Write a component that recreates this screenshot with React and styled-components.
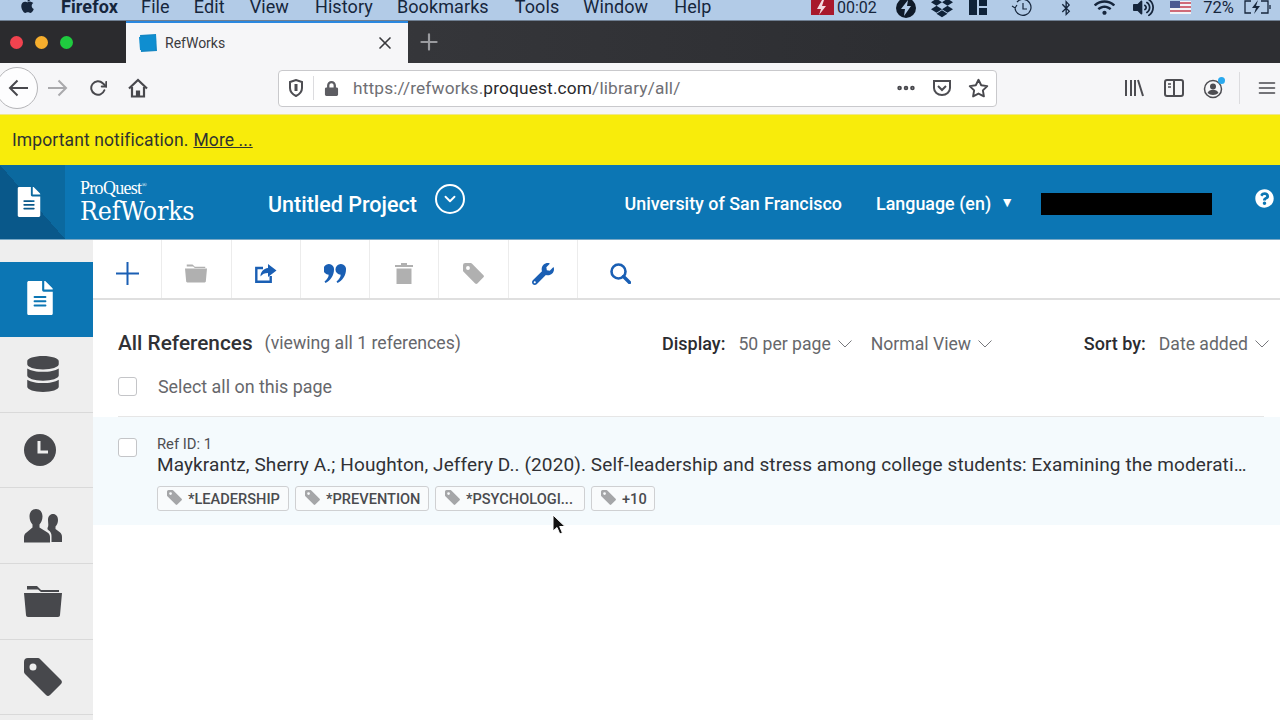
import React from "react";
import styled, { createGlobalStyle } from "styled-components";
import {
  FaApple, FaDropbox, FaBluetoothB, FaWifi, FaVolumeUp, FaDatabase, FaFileAlt,
  FaWrench, FaQuestionCircle, FaLock,
} from "react-icons/fa";
import { FiRotateCw, FiX, FiPlus, FiChevronDown, FiStar, FiMoreHorizontal, FiMenu } from "react-icons/fi";

const Global = createGlobalStyle`
  html, body { margin: 0; padding: 0; background: #fff; overflow: hidden; }
  body { font-family: Roboto, "Liberation Sans", sans-serif; }
  * { box-sizing: border-box; }
`;

const Page = styled.div`
  position: relative;
  width: 1280px;
  height: 720px;
  overflow: hidden;
  display: flex;
  flex-direction: column;
`;

/* mac menu bar */
const MenuBar = styled.div`
  height: 21px;
  flex: none;
  background: #b2cbe7;
  display: flex;
  align-items: flex-start;
  padding-left: 19px;
  color: #16263c;
  font-size: 18px;
  line-height: 14px;
  overflow: hidden;
  border-bottom: 1px solid #6f7f92;
`;
const MenuItem = styled.span`
  margin-left: ${(p) => p.$ml}px;
  font-weight: ${(p) => (p.$bold ? 700 : 400)};
  letter-spacing: 0.1px;
`;
const Status = styled.div`
  margin-left: auto;
  display: flex;
  align-items: center;
  height: 15px;
  font-size: 16px;
  color: #16263c;
`;
const StatusSlot = styled.span`
  display: flex;
  justify-content: center;
  align-items: center;
  width: ${(p) => p.$w}px;
  margin-left: ${(p) => p.$ml || 0}px;
  font-size: 16.5px;
`;
const Clock = styled.span`
  margin: 0 14px 0 3px;
  font-size: 16px;
  width: 45px;
`;

/* firefox tabs */
const TabStrip = styled.div`
  height: 42px;
  flex: none;
  background: linear-gradient(90deg, #3c3d41, #2d2e32 70%);
  display: flex;
  align-items: stretch;
`;
const Lights = styled.div`
  width: 126px;
  display: flex;
  align-items: center;
  gap: 12px;
  padding-left: 10px;
  background: #2b2b2e;
`;
const Light = styled.span`
  width: 13px;
  height: 13px;
  border-radius: 50%;
  background: ${(p) => p.$c};
`;
const Tab = styled.div`
  width: 282px;
  background: #f6f6f8;
  border-top: 2px solid #2a88e0;
  display: flex;
  align-items: center;
  padding-left: 12px;
  padding-right: 13px;
  font-size: 14px;
  color: #3b3b40;
`;
const TabTitle = styled.span`
  margin-left: 7px;
  flex: 1;
`;
const NewTab = styled.div`
  width: 42px;
  display: flex;
  align-items: center;
  justify-content: center;
  color: #9a9b9f;
`;

/* firefox nav */
const NavBar = styled.div`
  height: 51px;
  flex: none;
  background: #f6f6f8;
  display: flex;
  align-items: center;
  padding-bottom: 1px;
  color: #48484d;
`;
const BackCircle = styled.div`
  width: 42px;
  height: 42px;
  margin-left: -4px;
  border-radius: 50%;
  background: #fdfdfe;
  border: 1px solid #b5b5b8;
  display: flex;
  align-items: center;
  justify-content: center;
  padding-left: 2px;
`;
const NavSlot = styled.span`
  display: flex;
  justify-content: center;
  align-items: center;
  width: 40px;
  color: ${(p) => p.$c || "inherit"};
`;
const UrlBar = styled.div`
  margin-left: 120px;
  width: 719px;
  height: 37px;
  background: #fff;
  border: 1px solid #c9c9cc;
  border-radius: 4px;
  display: flex;
  align-items: center;
  padding-left: 9px;
`;
const UrlDivider = styled.span`
  width: 1px;
  height: 24px;
  background: #dcdcdf;
  margin: 0 10px 0 9px;
`;
const Url = styled.span`
  margin-left: 14px;
  flex: 1;
  font-size: 17.3px;
  letter-spacing: 0.15px;
  color: #6f6f74;
  b { font-weight: 400; color: #29292d; }
`;
const UrlSlot = styled.span`
  display: flex;
  justify-content: center;
  width: 36px;
`;
const NavRight = styled.div`
  margin-left: auto;
  display: flex;
  align-items: center;
  height: 100%;
`;
const NavDivider = styled.span`
  width: 1px;
  height: 32px;
  background: #dcdcdf;
  margin: 0 17px 0 5px;
`;

const Notice = styled.div`
  height: 51px;
  flex: none;
  background: #f8ec0b;
  border-top: 1px solid #f0e88a;
  display: flex;
  align-items: center;
  padding-left: 12px;
  font-size: 17.5px;
  color: #2f3330;
  letter-spacing: 0.1px;
  u { margin-left: 5px; }
`;

/* refworks header */
const Header = styled.div`
  height: 75px;
  flex: none;
  background: #0c76b4;
  display: flex;
  align-items: center;
  color: #fff;
  border-bottom: 1px solid #7aa9c6;
`;
const DocTab = styled.div`
  width: 65px;
  height: 100%;
  background: linear-gradient(to bottom left, #0b699f 50%, #09588a 50%);
  display: flex;
  align-items: center;
  justify-content: center;
  padding-right: 7px;
`;
const Logo = styled.div`
  margin-left: 15px;
  width: 188px;
  display: flex;
  flex-direction: column;
  margin-top: 0;
`;
const LogoTop = styled.span`
  font-family: "Liberation Serif", serif;
  font-size: 18px;
  line-height: 17px;
  letter-spacing: -0.7px;
  sup { font-size: 7px; vertical-align: 7px; line-height: 0; }
`;
const LogoMain = styled.span`
  font-family: "DejaVu Serif Condensed", "Liberation Serif", serif;
  font-size: 26.5px;
  line-height: 28px;
  letter-spacing: -0.2px;
`;
const Project = styled.span`
  font-size: 21.5px;
  font-weight: 500;
  margin-top: 4px;
`;
const ProjectToggle = styled.span`
  width: 30px;
  height: 30px;
  margin-left: 18px;
  margin-top: -7px;
  border: 2px solid #fff;
  border-radius: 50%;
  display: flex;
  align-items: center;
  justify-content: center;
`;
const HeaderRight = styled.div`
  margin-left: auto;
  display: flex;
  align-items: center;
  font-size: 17.9px;
  font-weight: 500;
  height: 100%;
  padding-top: 2px;
`;
const Caret = styled.span`
  font-size: 14px;
  margin-left: 9px;
  margin-top: -3px;
`;
const Redacted = styled.span`
  width: 171px;
  height: 22px;
  margin-left: 27px;
  margin-top: 2px;
  background: #000;
`;
const Help = styled.span`
  display: flex;
  margin-left: 43px;
  margin-right: 6px;
  margin-top: -10px;
`;

/* body */
const Main = styled.div`
  flex: 1;
  display: flex;
  min-height: 0;
`;
const Sidebar = styled.div`
  width: 93px;
  flex: none;
  background: #eeeeee;
  padding-top: 22px;
  display: flex;
  flex-direction: column;
`;
const SideItem = styled.div`
  height: ${(p) => (p.$active ? 75 : 75.7)}px;
  flex: none;
  background: ${(p) => (p.$active ? "#0c76b4" : "transparent")};
  color: ${(p) => (p.$active ? "#fff" : "#47484c")};
  border-bottom: ${(p) => (p.$active ? "none" : "1.5px solid #d9d9d9")};
  display: flex;
  align-items: center;
  justify-content: center;
  padding-right: ${(p) => p.$pr}px;
  padding-bottom: ${(p) => (p.$active ? 4 : 0)}px;
`;
const Content = styled.div`
  flex: 1;
  min-width: 0;
  display: flex;
  flex-direction: column;
`;
const Toolbar = styled.div`
  height: 60px;
  flex: none;
  display: flex;
  border-bottom: 2px solid #dfdfdf;
`;
const Tool = styled.div`
  width: 69.3px;
  display: flex;
  align-items: center;
  justify-content: center;
  padding-top: 9px;
  padding-left: ${(p) => p.$pl || 0}px;
  border-right: ${(p) => (p.$last ? "none" : "1px solid #ececec")};
  color: ${(p) => (p.$off ? "#b0b0b0" : "#1a5fb4")};
`;
const ListHead = styled.div`
  display: flex;
  align-items: center;
  height: 35px;
  margin-top: 25px;
  padding-left: 25px;
  padding-right: 11px;
  flex: none;
`;
const HeadTitle = styled.span`
  font-size: 20.8px;
  font-weight: 500;
  color: #303135;
`;
const HeadCount = styled.span`
  font-size: 17.7px;
  margin-left: 12px;
  color: #66676b;
`;
const Control = styled.div`
  display: flex;
  align-items: center;
  margin-left: ${(p) => p.$ml}px;
  font-size: 17.6px;
  color: #66676b;
  margin-top: ${(p) => p.$mt || 0}px;
  label { color: #2b2c30; font-weight: 500; margin-right: 13px; font-size: 18px; }
  svg { margin-left: 7px; }
`;
const SortControl = styled(Control)`
  margin-left: auto;
`;
const SelectRow = styled.div`
  display: flex;
  align-items: center;
  height: 38px;
  margin-top: 7px;
  padding-left: 25px;
  flex: none;
  font-size: 17.9px;
  color: #66676b;
`;
const Check = styled.span`
  width: 19px;
  height: 19px;
  flex: none;
  background: #fff;
  border: 1px solid #c4c5c8;
  border-radius: 3px;
  margin-right: 21px;
`;
const Rule = styled.div`
  height: 1px;
  flex: none;
  margin: 11px 16px 0 25px;
  background: #e6e6e6;
`;
const RefRow = styled.div`
  height: 108px;
  flex: none;
  background: #f4fafd;
  display: flex;
  padding: 21px 25px 0 25px;
`;
const RefBody = styled.div`
  min-width: 0;
  flex: 1;
  margin-top: -2px;
  margin-left: -1px;
`;
const RefId = styled.div`
  font-size: 14.8px;
  line-height: 16px;
  color: #4d4e52;
`;
const RefTitle = styled.div`
  font-size: 19px;
  line-height: 23px;
  margin-top: 1px;
  color: #303135;
  white-space: nowrap;
  overflow: hidden;
  text-overflow: ellipsis;
  letter-spacing: 0.1px;
`;
const Tags = styled.div`
  display: flex;
  gap: 6px;
  margin-top: 10px;
`;
const Tag = styled.span`
  width: ${(p) => p.$w}px;
  height: 25px;
  border: 1px solid #cfd0d2;
  border-radius: 3px;
  background: #f9fbfc;
  display: flex;
  align-items: center;
  padding-left: 9px;
  font-size: 14.6px;
  font-weight: 500;
  color: #4a4b4f;
  svg { color: #a5a6a8; margin-right: 6px; margin-top: -2px; flex: none; }
`;
const Cursor = styled.svg`
  position: absolute;
  left: 552px;
  top: 514px;
`;

const Chevron = () => (
  <svg width="14" height="8" viewBox="0 0 14 8" fill="none" stroke="#77787c" strokeWidth="1">
    <path d="M.5.5L7 7 13.500.5" />
  </svg>
);
const TagIcon = ({ size }) => (
  <svg width={size} height={size} viewBox="0 0 38 38" fill="currentColor">
    <path fillRule="evenodd" d="M4 0h10a3 3 0 0 1 2 1l21 21a3 3 0 0 1 0 4L26 37a3 3 0 0 1-4 0L1 16a3 3 0 0 1-1-2V4a4 4 0 0 1 4-4zm5 5.500a3.500 3.500 0 1 0 0 7 3.500 3.500 0 0 0 0-7z" />
  </svg>
);
const FolderIcon = ({ w, h }) => (
  <svg width={w} height={h} viewBox="0 0 38 31" fill="currentColor">
    <path d="M3 0h10l4 4h18v2H17l-3-2.500H3z" />
    <path d="M0 7h38l-2 22c0 1-.8 2-2 2H4c-1.200 0-2-1-2-2z" />
  </svg>
);
const PlusIcon = () => (
  <svg width="23" height="23" viewBox="0 0 23 23" stroke="currentColor" strokeWidth="2">
    <path d="M11.500 0v23M0 11.500h23" />
  </svg>
);
const ShareIcon = () => (
  <svg width="22" height="19" viewBox="0 0 22 19" fill="currentColor">
    <path d="M8 4H1.300v13.700h14.400V12" fill="none" stroke="currentColor" strokeWidth="2.400" />
    <path d="M13 0l8.500 6.500L13 13V9c-3.500 0-5.500 1-7.500 3.500C5.500 8 8.500 4.500 13 4z" />
  </svg>
);
const QuoteIcon = () => (
  <svg width="22" height="20" viewBox="0 0 22 20" fill="currentColor">
    <path id="q" d="M5 0a5 5 0 0 1 5 5.500c0 6-3.500 11-8.500 13.500L.5 17.500C3 15.500 4.500 13.500 4.700 10.800A5.300 5.300 0 0 1 5 0z" />
    <path d="M17 0a5 5 0 0 1 5 5.500c0 6-3.500 11-8.500 13.500l-1-1.500c2.500-2 4-4 4.200-6.700A5.300 5.300 0 0 1 17 0z" />
  </svg>
);
const TrashIcon = () => (
  <svg width="18" height="21" viewBox="0 0 18 21" fill="currentColor">
    <path d="M6 0h6v2h6v2H0V2h6z" />
    <path d="M1.500 5.500h15V21h-15z" />
  </svg>
);
const SearchIcon = () => (
  <svg width="21" height="21" viewBox="0 0 21 21" fill="none" stroke="currentColor">
    <circle cx="8.500" cy="8.500" r="7" strokeWidth="2.600" />
    <path d="M13.500 13.500l6 6" strokeWidth="3.400" strokeLinecap="round" />
  </svg>
);

const TOOLS = [
  { icon: <PlusIcon /> },
  { icon: <FolderIcon w={22} h={19} />, off: true },
  { icon: <ShareIcon /> },
  { icon: <QuoteIcon /> },
  { icon: <TrashIcon />, off: true },
  { icon: <TagIcon size={21} />, off: true },
  { icon: <FaWrench size={22} /> },
  { icon: <SearchIcon />, last: true, pl: 16 },
];

const ClockIcon = () => (
  <svg width="32" height="32" viewBox="0 0 32 32">
    <circle cx="16" cy="16" r="16" fill="currentColor" />
    <path d="M15 7v11h9" fill="none" stroke="#eee" strokeWidth="3" />
  </svg>
);
const PeopleIcon = () => (
  <svg width="38" height="34" viewBox="0 0 38 34" fill="currentColor">
    <path d="M12 0c4 0 6.500 3 6.500 7.500 0 3.500-1.500 6.500-3 8v3l8 5c2 1.200 2.500 3 2.500 5v5H0v-5c0-2 .5-3.800 2.500-5l6-5v-3c-1.500-1.500-3-4.500-3-8C5.500 3 8 0 12 0z" />
    <path d="M29 5c3 0 5 2.500 5 6 0 3-1 5-2.500 6.500v2.500l4 3c1.800 1.200 2.500 3 2.500 5v5H27.500v-6c0-2.500-1-4.500-3-5.800l-1-1v-1.200C25 17 24 14 24 11c0-3.500 2-6 5-6z" />
  </svg>
);
const Favicon = () => (
  <svg width="20" height="20" viewBox="0 0 20 20">
    <path d="M2 2l16-1 1 17-16 1z" fill="#1487c4" />
    <path d="M1 4l17-2-1 15H2z" fill="#0f8ed0" />
  </svg>
);
const ArrowLeft = () => (
  <svg width="20" height="18" viewBox="0 0 20 18" fill="none" stroke="currentColor" strokeWidth="2">
    <path d="M20 9H2M9.500 1.500L2 9l7.500 7.500" />
  </svg>
);
const ArrowRight = () => (
  <svg width="20" height="18" viewBox="0 0 20 18" fill="none" stroke="currentColor" strokeWidth="2">
    <path d="M0 9h18M10.500 1.500L18 9l-7.500 7.500" />
  </svg>
);
const HomeIcon = () => (
  <svg width="20" height="20" viewBox="0 0 20 20" fill="none" stroke="currentColor" strokeWidth="2.200">
    <path d="M1 10.500L10 2l9 8.500" />
    <path d="M4 9v9.500h12V9" />
    <path d="M8.500 18v-5h3v5" fill="currentColor" strokeWidth="1.200" />
  </svg>
);
const Shield = () => (
  <svg width="16" height="18" viewBox="0 0 16 18" fill="none" stroke="#4d4d52" strokeWidth="2">
    <path d="M2 3l6-2 6 2v6c0 4-3 6.500-6 8-3-1.500-6-4-6-8z" />
    <path d="M8 5v7" strokeWidth="3" />
  </svg>
);
const Pocket = () => (
  <svg width="20" height="18" viewBox="0 0 20 18" fill="none" stroke="#4d4d52" strokeWidth="2">
    <path d="M2 2h16v7c0 4-3.500 7-8 7s-8-3-8-7z" />
    <path d="M6 7l4 4 4-4" />
  </svg>
);
const Library = () => (
  <svg width="20" height="18" viewBox="0 0 20 18" stroke="#4d4d52" strokeWidth="2" fill="none">
    <path d="M2 1v16M7 1v16M11 1v16M14 1l5 16" />
  </svg>
);
const SidebarIcon = () => (
  <svg width="20" height="18" viewBox="0 0 20 18" fill="none" stroke="#4d4d52" strokeWidth="2">
    <rect x="1" y="1" width="18" height="16" rx="2" />
    <path d="M10 1v16" />
    <path d="M4 5h3M4 8h3" strokeWidth="1.300" />
  </svg>
);
const Account = () => (
  <svg width="24" height="24" viewBox="0 0 24 24">
    <circle cx="11" cy="13" r="8.500" fill="none" stroke="#4d4d52" strokeWidth="1.500" />
    <circle cx="11" cy="10.500" r="3" fill="#4d4d52" />
    <path d="M5.500 17c1-2.500 3-3.200 5.500-3.200s4.500.7 5.500 3.200c-1.500 1.300-3.300 2-5.500 2s-4-.7-5.500-2z" fill="#4d4d52" />
    <circle cx="19.500" cy="4.500" r="3.500" fill="#2aa9ee" />
  </svg>
);
const Flash = () => (
  <svg width="23" height="15" viewBox="0 0 23 15">
    <path d="M0 0h23v15H0z" fill="#a8182b" />
    <path d="M11 0L6 9h4l-2 6 7-9h-4l2-6z" fill="#f3dbe0" />
  </svg>
);
const Flag = () => (
  <svg width="21" height="13" viewBox="0 0 21 13">
    <path d="M0 0h21v13H0z" fill="#f2f2f6" />
    <path d="M0 1h21v2H0zM0 5h21v2H0zM0 9h21v2H0z" fill="#cf6a78" />
    <path d="M0 0h10v7H0z" fill="#4c5a92" />
  </svg>
);
const Battery = () => (
  <svg width="29" height="15" viewBox="0 0 29 15" fill="none" stroke="#16263c">
    <path d="M8 1H2v12h6M18 1h7v12h-7M27 5v4" strokeWidth="1.300" />
    <path d="M15 0l-6 8h4l-2 6 6-8h-4z" fill="#16263c" stroke="none" />
  </svg>
);
const Grid = () => (
  <svg width="18" height="15" viewBox="0 0 18 15" fill="#0f2238">
    <path d="M0 0h8v15H0zM10 0h8v6h-8zM10 8h8v7h-8z" />
  </svg>
);
const TimeMachine = () => (
  <svg width="22" height="16" viewBox="0 0 22 16" fill="none" stroke="#16263c" strokeWidth="1.200">
    <path d="M4 8a8 8 0 1 0 2-6M1 6l3 2 2-3M12 3v6h4" />
  </svg>
);
const BoltCircle = () => (
  <svg width="20" height="20" viewBox="0 0 20 20">
    <circle cx="10" cy="10" r="10" fill="#0f1a28" />
    <path d="M12 2L5 11h4l-1 7 7-10h-4z" fill="#b2cbe7" />
  </svg>
);

export default function App() {
  return (
    <Page>
      <Global />
      <MenuBar>
        <FaApple size={17} style={{ marginTop: -3 }} />
        <MenuItem $ml={25} $bold>Firefox</MenuItem>
        <MenuItem $ml={23}>File</MenuItem>
        <MenuItem $ml={24}>Edit</MenuItem>
        <MenuItem $ml={25}>View</MenuItem>
        <MenuItem $ml={26}>History</MenuItem>
        <MenuItem $ml={24}>Bookmarks</MenuItem>
        <MenuItem $ml={26}>Tools</MenuItem>
        <MenuItem $ml={24}>Window</MenuItem>
        <MenuItem $ml={26}>Help</MenuItem>
        <Status>
          <Flash />
          <Clock>00:02</Clock>
          <BoltCircle />
          <StatusSlot $w={24} $ml={14}><FaDropbox size={22} color="#0f2238" /></StatusSlot>
          <StatusSlot $w={24} $ml={12}><Grid /></StatusSlot>
          <StatusSlot $w={24} $ml={20}><TimeMachine /></StatusSlot>
          <StatusSlot $w={24} $ml={20}><FaBluetoothB size={16} /></StatusSlot>
          <StatusSlot $w={28} $ml={12}><FaWifi size={21} /></StatusSlot>
          <StatusSlot $w={28} $ml={11}><FaVolumeUp size={21} /></StatusSlot>
          <StatusSlot $w={24} $ml={11}><Flag /></StatusSlot>
          <StatusSlot $w={37} $ml={8}>72%</StatusSlot>
          <StatusSlot $w={29} $ml={6}><Battery /></StatusSlot>
          <StatusSlot $w={8} />
        </Status>
      </MenuBar>

      <TabStrip>
        <Lights>
          <Light $c="#f1434f" />
          <Light $c="#f6ae2d" />
          <Light $c="#1fcb3f" />
        </Lights>
        <Tab>
          <Favicon />
          <TabTitle>RefWorks</TabTitle>
          <FiX size={20} strokeWidth={2} color="#3a3a3e" />
        </Tab>
        <NewTab><FiPlus size={26} strokeWidth={2} /></NewTab>
      </TabStrip>

      <NavBar>
        <BackCircle><ArrowLeft /></BackCircle>
        <NavSlot $c="#a9a9ac"><ArrowRight /></NavSlot>
        <NavSlot><FiRotateCw size={18} strokeWidth={2.6} /></NavSlot>
        <NavSlot><HomeIcon /></NavSlot>
        <UrlBar>
          <Shield />
          <UrlDivider />
          <FaLock size={15} color="#5d5d62" />
          <Url>https://refworks.<b>proquest.com</b>/library/all/</Url>
          <UrlSlot><FiMoreHorizontal size={22} strokeWidth={3} /></UrlSlot>
          <UrlSlot><Pocket /></UrlSlot>
          <UrlSlot><FiStar size={21} strokeWidth={2.2} /></UrlSlot>
        </UrlBar>
        <NavRight>
          <NavSlot><Library /></NavSlot>
          <NavSlot><SidebarIcon /></NavSlot>
          <NavSlot><Account /></NavSlot>
          <NavDivider />
          <FiMenu size={20} strokeWidth={2} style={{ marginRight: 3 }} />
        </NavRight>
      </NavBar>

      <Notice>Important notification. <u>More ...</u></Notice>

      <Header>
        <DocTab><FaFileAlt size={30} /></DocTab>
        <Logo>
          <LogoTop>ProQuest<sup>®</sup></LogoTop>
          <LogoMain>RefWorks</LogoMain>
        </Logo>
        <Project>Untitled Project</Project>
        <ProjectToggle><FiChevronDown size={18} strokeWidth={2.5} /></ProjectToggle>
        <HeaderRight>
          <span>University of San Francisco</span>
          <span style={{ marginLeft: 34 }}>Language (en)</span>
          <Caret>▼</Caret>
          <Redacted />
          <Help><FaQuestionCircle size={19} /></Help>
        </HeaderRight>
      </Header>

      <Main>
        <Sidebar>
          <SideItem $active $pr={13}><FaFileAlt size={34} /></SideItem>
          <SideItem $pr={7}><FaDatabase size={36} /></SideItem>
          <SideItem $pr={13}><ClockIcon /></SideItem>
          <SideItem $pr={7}><PeopleIcon /></SideItem>
          <SideItem $pr={7}><FolderIcon w={38} h={31} /></SideItem>
          <SideItem $pr={7}><TagIcon size={38} /></SideItem>
        </Sidebar>
        <Content>
          <Toolbar>
            {TOOLS.map((t, i) => (
              <Tool key={i} $off={t.off} $last={t.last} $pl={t.pl}>{t.icon}</Tool>
            ))}
          </Toolbar>
          <ListHead>
            <HeadTitle>All References</HeadTitle>
            <HeadCount>(viewing all 1 references)</HeadCount>
            <Control $ml={201} $mt={2}><label>Display:</label>50 per page<Chevron /></Control>
            <Control $ml={19} $mt={3}>Normal View<Chevron /></Control>
            <SortControl $mt={2}><label>Sort by:</label>Date added<Chevron /></SortControl>
          </ListHead>
          <SelectRow><Check />Select all on this page</SelectRow>
          <Rule />
          <RefRow>
            <Check />
            <RefBody>
              <RefId>Ref ID: 1</RefId>
              <RefTitle>Maykrantz, Sherry A.; Houghton, Jeffery D.. (2020). Self-leadership and stress among college students: Examining the moderating role of coping strategies</RefTitle>
              <Tags>
                <Tag $w={132}><TagIcon size={15} />*LEADERSHIP</Tag>
                <Tag $w={134}><TagIcon size={15} />*PREVENTION</Tag>
                <Tag $w={150}><TagIcon size={15} />*PSYCHOLOGI...</Tag>
                <Tag $w={64}><TagIcon size={15} />+10</Tag>
              </Tags>
            </RefBody>
          </RefRow>
        </Content>
      </Main>

      <Cursor width="14" height="22" viewBox="0 0 14 22">
        <path d="M1 1v16l4-3.500 2.800 6.500 2.600-1.200L7.700 12.500H13z" fill="#111" stroke="#fff" strokeWidth="1" />
      </Cursor>
    </Page>
  );
}
